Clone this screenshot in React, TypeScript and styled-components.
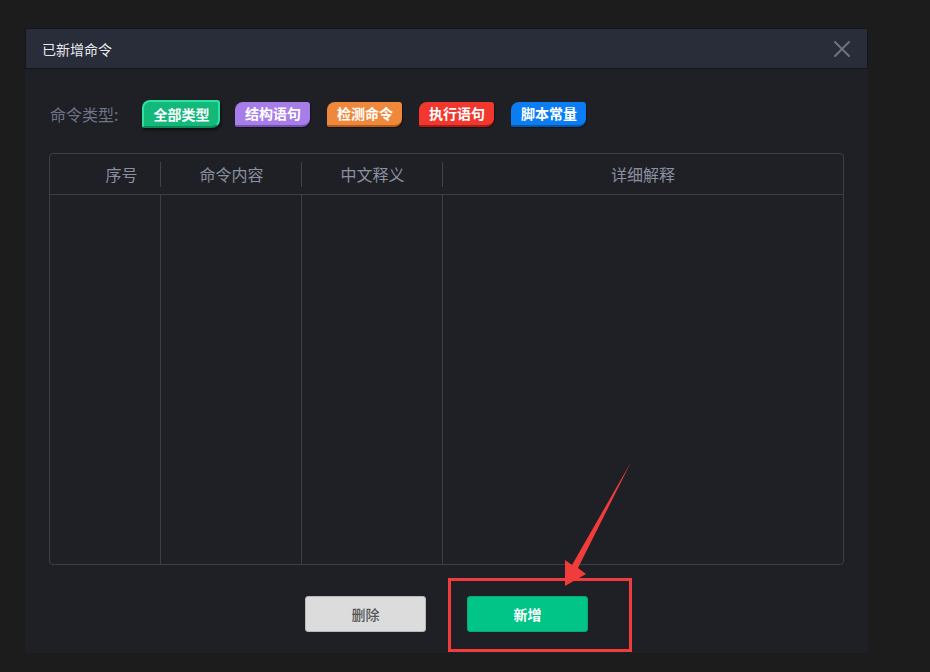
import styled, { createGlobalStyle } from "styled-components";

const GlobalStyle = createGlobalStyle`
  html, body {
    margin: 0;
    padding: 0;
    background: #1c1c1c;
    font-family: "Noto Sans CJK SC", "Noto Sans", sans-serif;
  }
`;

type tagType = { label: string; color: string; edge: string; active?: boolean };

const tags: tagType[] = [
  { label: "全部类型", color: "#13b97b", edge: "#0a7f54", active: true },
  { label: "结构语句", color: "#a77de9", edge: "#7652b3" },
  { label: "检测命令", color: "#ef883b", edge: "#b75d1c" },
  { label: "执行语句", color: "#f2372e", edge: "#b01b14" },
  { label: "脚本常量", color: "#0b7df2", edge: "#0755ad" },
];

const columns = ["序号", "命令内容", "中文释义", "详细解释"];

const App = () => {
  return (
    <Page>
      <GlobalStyle />
      <Dialog>
        <DialogHeader>
          <Title>已新增命令</Title>
          <CloseButton aria-label="close">
            <svg width="18" height="18" viewBox="0 0 18 18">
              <path d="M2 2 L16 16 M16 2 L2 16" stroke="#6d7183" strokeWidth="2" strokeLinecap="round" />
            </svg>
          </CloseButton>
        </DialogHeader>
        <DialogBody>
          <TypeRow>
            <TypeLabel>命令类型:</TypeLabel>
            {tags.map((t) => (
              <Tag key={t.label} $color={t.color} $edge={t.edge} $active={!!t.active}>
                {t.label}
              </Tag>
            ))}
          </TypeRow>
          <Table>
            <HeaderRow>
              {columns.map((c, i) => (
                <HeaderCell key={c} $first={i === 0} $last={i === columns.length - 1}>
                  {c}
                </HeaderCell>
              ))}
            </HeaderRow>
            <BodyRow>
              {columns.map((c, i) => (
                <BodyCell key={c} $last={i === columns.length - 1} />
              ))}
            </BodyRow>
          </Table>
          <ButtonRow>
            <Button $variant="grey">删除</Button>
            <Button $variant="green">新增</Button>
          </ButtonRow>
        </DialogBody>
      </Dialog>
      <Highlight />
      <Arrow width="80" height="130" viewBox="560 458 80 130">
        <polygon
          points="631,462 578,568 586,574 565,586 565,560 572,565"
          fill="#f23b3b"
        />
      </Arrow>
    </Page>
  );
};

export default App;

const Page = styled.div`
  position: relative;
  width: 930px;
  height: 672px;
  padding: 28px 0 0 25px;
  box-sizing: border-box;
  overflow: hidden;
`;

const Dialog = styled.div`
  width: 843px;
  display: flex;
  flex-direction: column;
`;

const DialogHeader = styled.div`
  height: 41px;
  box-sizing: border-box;
  background: #292c39;
  border: 1px solid #15161b;
  display: flex;
  align-items: center;
  justify-content: space-between;
  padding: 0 14px 0 16px;
`;

const Title = styled.span`
  color: #e6e8ee;
  font-size: 14px;
`;

const CloseButton = styled.div`
  display: flex;
  align-items: center;
  justify-content: center;
  width: 22px;
  height: 22px;
`;

const DialogBody = styled.div`
  height: 584px;
  box-sizing: border-box;
  background: #1f2025;
  padding: 31px 24px 0 24px;
  display: flex;
  flex-direction: column;
`;

const TypeRow = styled.div`
  display: flex;
  align-items: center;
  height: 28px;
`;

const TypeLabel = styled.span`
  color: #6f7487;
  font-size: 16px;
  margin-left: 1px;
  margin-right: 24px;
`;

const Tag = styled.div<{ $color: string; $edge: string; $active: boolean }>`
  box-sizing: border-box;
  width: ${(p) => (p.$active ? "78px" : "75px")};
  height: ${(p) => (p.$active ? "28px" : "25px")};
  margin-right: ${(p) => (p.$active ? "15px" : "17px")};
  display: flex;
  align-items: center;
  justify-content: center;
  background: ${(p) => p.$color};
  color: #ffffff;
  font-size: 14px;
  font-weight: 700;
  border-radius: 8px 3px 8px 2px;
  border: ${(p) => (p.$active ? "2px solid #2ee3a0" : "none")};
  border-bottom: 2px solid ${(p) => (p.$active ? "#0b8a5a" : p.$edge)};
  box-shadow: ${(p) => (p.$active ? "1px 2px 3px rgba(0,0,0,0.6)" : "1px 1px 1px rgba(0,0,0,0.4)")};
`;

const Table = styled.div`
  margin-top: 25px;
  height: 412px;
  box-sizing: border-box;
  border: 1px solid #3b3e4a;
  border-radius: 4px;
  display: flex;
  flex-direction: column;
`;

const HeaderRow = styled.div`
  display: grid;
  grid-template-columns: 111px 141px 141px 1fr;
  height: 40px;
  border-bottom: 1px solid #3b3e4a;
`;

const HeaderCell = styled.div<{ $first: boolean; $last: boolean }>`
  display: flex;
  align-items: center;
  justify-content: center;
  color: #8a8fa1;
  font-size: 16px;
  padding-left: ${(p) => (p.$first ? "32px" : "0")};
  position: relative;

  &::after {
    content: "";
    display: ${(p) => (p.$last ? "none" : "block")};
    position: absolute;
    right: 0;
    top: 8px;
    bottom: 7px;
    width: 1px;
    background: #3f424e;
  }
`;

const BodyRow = styled.div`
  flex: 1;
  display: grid;
  grid-template-columns: 111px 141px 141px 1fr;
`;

const BodyCell = styled.div<{ $last: boolean }>`
  border-right: ${(p) => (p.$last ? "none" : "1px solid #3b3e4a")};
`;

const ButtonRow = styled.div`
  display: flex;
  justify-content: center;
  gap: 41px;
  margin-top: 31px;
`;

const Button = styled.div<{ $variant: "grey" | "green" }>`
  width: 121px;
  height: 36px;
  box-sizing: border-box;
  display: flex;
  align-items: center;
  justify-content: center;
  border-radius: 3px;
  font-size: 14px;
  font-weight: ${(p) => (p.$variant === "green" ? 700 : 500)};
  background: ${(p) => (p.$variant === "green" ? "#00c586" : "#dcdcdc")};
  color: ${(p) => (p.$variant === "green" ? "#ffffff" : "#555555")};
  border: 1px solid ${(p) => (p.$variant === "green" ? "#0aa874" : "#b9b9b9")};
`;

const Highlight = styled.div`
  position: absolute;
  left: 448px;
  top: 578px;
  width: 184px;
  height: 74px;
  box-sizing: border-box;
  border: 3px solid #f03c3c;
`;

const Arrow = styled.svg`
  position: absolute;
  left: 560px;
  top: 458px;
`;
